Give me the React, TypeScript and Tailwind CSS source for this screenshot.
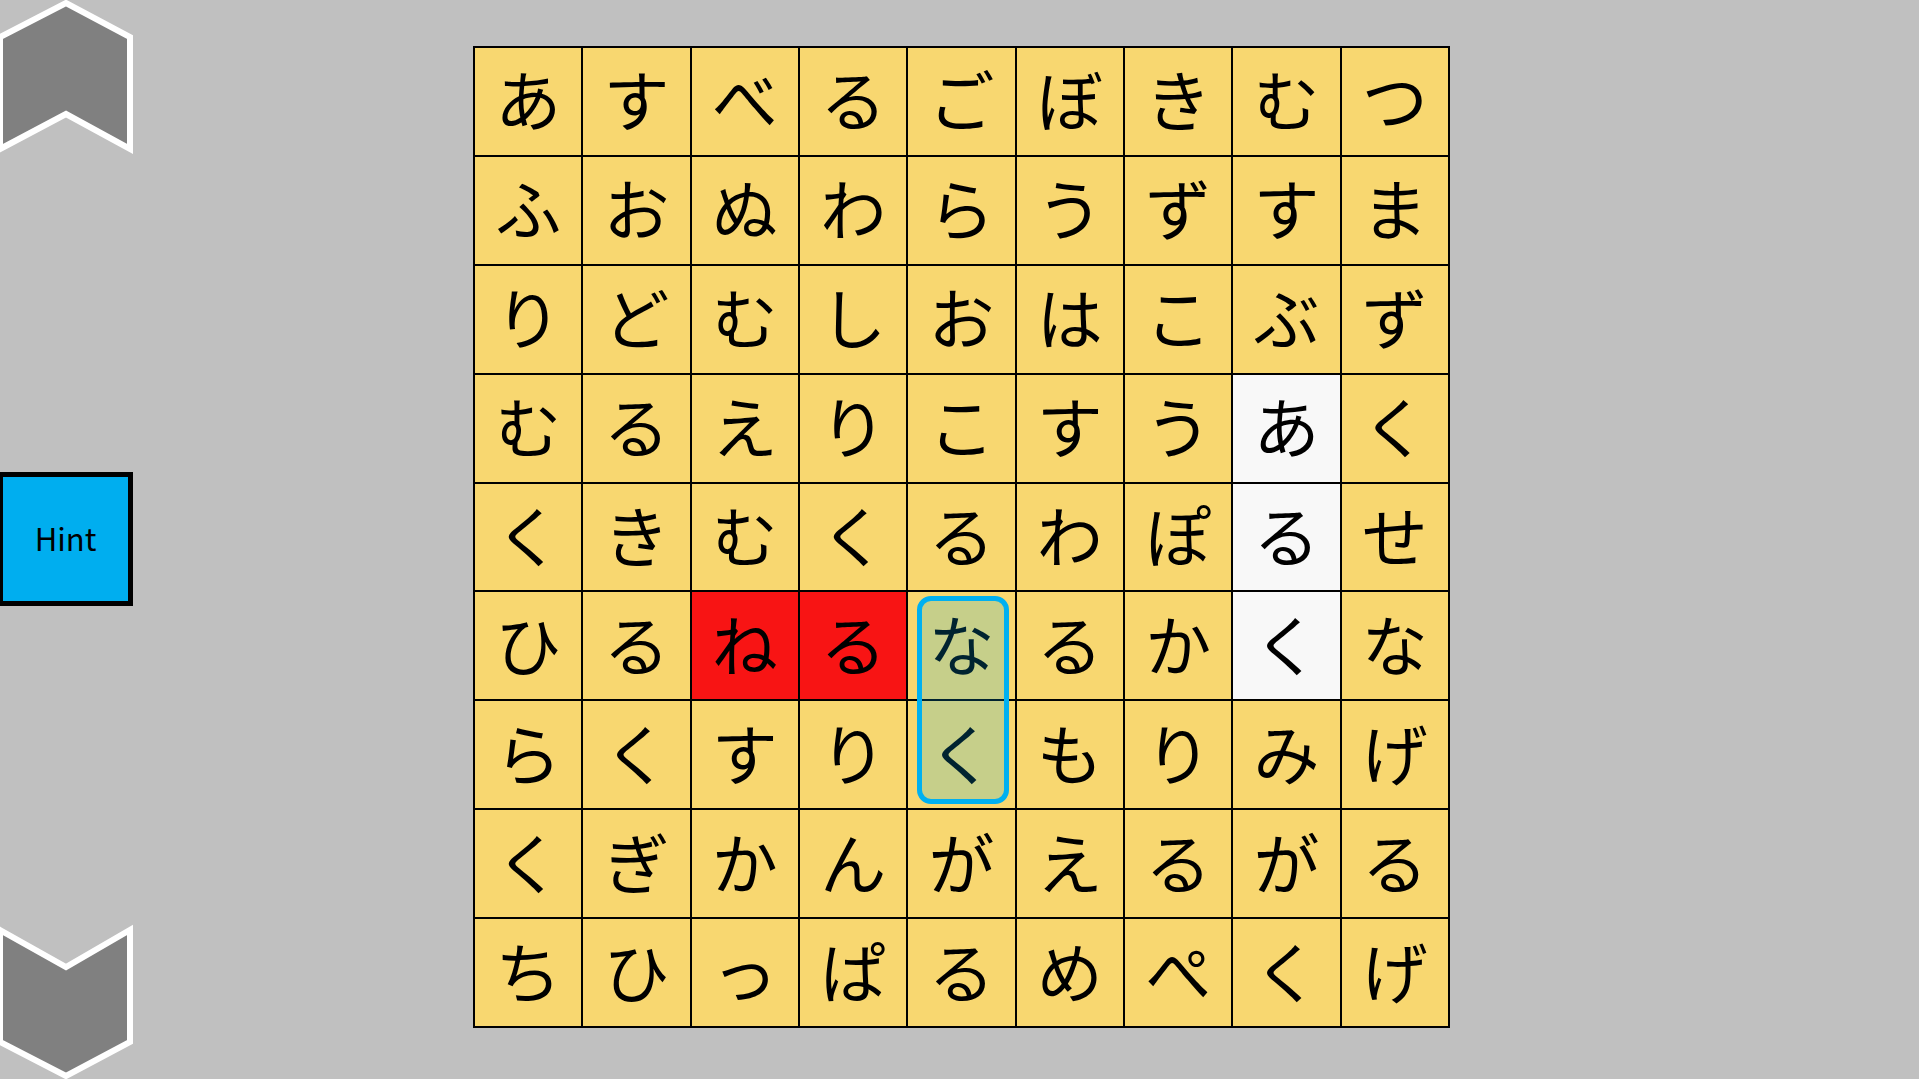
import React from 'react';

// 9x9 kana board; the row strings are read left to right
const ROWS = [
  'あすべるごぼきむつ',
  'ふおぬわらうずすま',
  'りどむしおはこぶず',
  'むるえりこすうあく',
  'くきむくるわぽるせ',
  'ひるねるなるかくな',
  'らくすりくもりみげ',
  'くぎかんがえるがる',
  'ちひっぱるめぺくげ',
];

// cells that are marked: red = wrong pick, white = found word
const RED = new Set(['5-2', '5-3']);
const WHITE = new Set(['3-7', '4-7', '5-7']);

function cellBg(key: string) {
  if (RED.has(key)) return 'bg-[#f81414]';
  if (WHITE.has(key)) return 'bg-[#f8f8f8]';
  return 'bg-[#f8d770]';
}

function ChevronUp() {
  return (
    <svg width="133" height="152" viewBox="0 0 133 152" className="block overflow-visible">
      <polygon
        points="0,37 66,3 130,37 130,149 66,114 0,149"
        fill="#808080"
        stroke="#ffffff"
        strokeWidth="6"
        strokeLinejoin="miter"
      />
    </svg>
  );
}

function ChevronDown() {
  return (
    <svg width="133" height="154" viewBox="0 0 133 154" className="block overflow-visible">
      <polygon
        points="0,5 66,42 130,5 130,117 66,151 0,117"
        fill="#808080"
        stroke="#ffffff"
        strokeWidth="6"
        strokeLinejoin="miter"
      />
    </svg>
  );
}

export default function App() {
  return (
    <div
      className="flex h-[1079px] w-full overflow-hidden bg-[#c0c0c0]"
      style={{ fontFamily: '"Noto Sans CJK JP", "Noto Sans", sans-serif' }}
    >
      {/* Left controls: scroll up, hint, scroll down */}
      <aside className="flex w-[133px] flex-shrink-0 flex-col justify-between">
        <ChevronUp />
        <button
          type="button"
          className="flex h-[134px] w-[133px] items-center justify-center border-y-[5px] border-r-[5px] border-l-[3px] border-black bg-[#00aeef] text-[31px] text-black"
        >
          Hint
        </button>
        <ChevronDown />
      </aside>

      {/* Board */}
      <main className="flex flex-1 items-center justify-center pb-[5px]">
        <div className="relative grid h-[982px] w-[977px] grid-cols-9 grid-rows-9 gap-[2px] border-2 border-black bg-black">
          {ROWS.map((row, r) =>
            Array.from(row).map((ch, c) => {
              const key = `${r}-${c}`;
              return (
                <div
                  key={key}
                  className={`flex items-center justify-center pb-[8px] text-[66px] leading-none text-black ${cellBg(key)}`}
                >
                  {ch}
                </div>
              );
            }),
          )}
          {/* current selection outline (な / く) */}
          <div className="pointer-events-none absolute left-[442px] top-[548px] h-[208px] w-[92px] rounded-[14px] border-[5px] border-[#00b0f0] bg-[#00b0f0]/20" />
        </div>
      </main>
      <div className="w-[129px] flex-shrink-0" />
    </div>
  );
}
